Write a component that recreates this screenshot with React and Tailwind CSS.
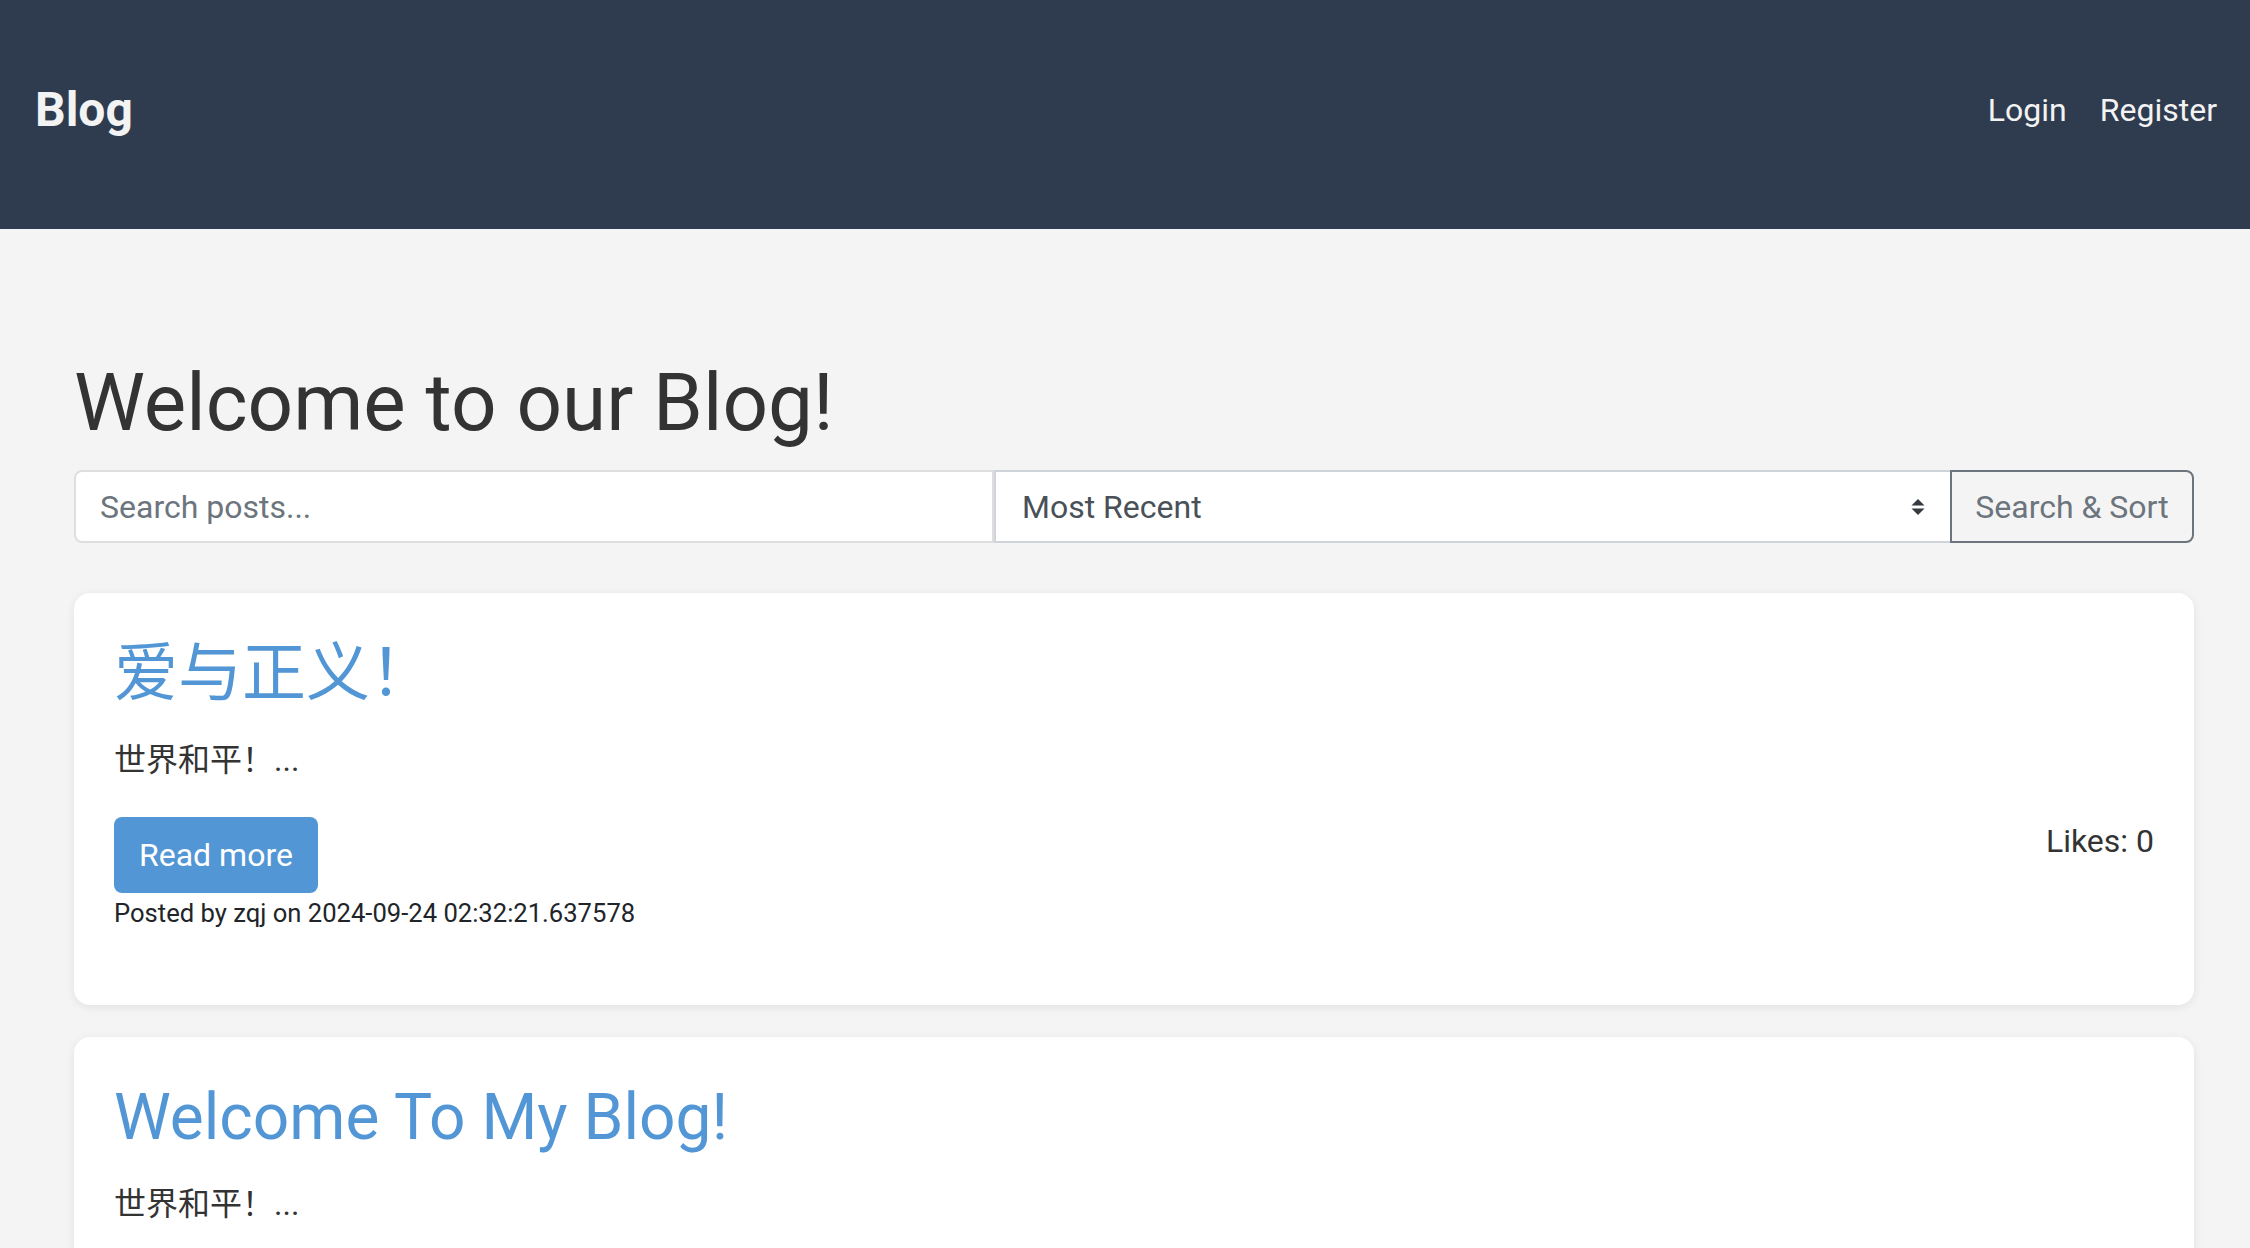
import { useState } from "react";

const posts = [
  {
    id: 1,
    title: "爱与正义！",
    excerpt: "世界和平！...",
    author: "zqj",
    created: "2024-09-24 02:32:21.637578",
    likes: 0,
  },
  {
    id: 2,
    title: "Welcome To My Blog!",
    excerpt: "世界和平！...",
    author: "zqj",
    created: "2024-09-24 02:30:11.215034",
    likes: 0,
  },
];

function SortArrows() {
  return (
    <svg width="16" height="20" viewBox="0 0 16 20" className="shrink-0">
      <path d="M1.5 8.5 L8 2 L14.5 8.5 Z" fill="#343a40" />
      <path d="M1.5 11.5 L8 18 L14.5 11.5 Z" fill="#343a40" />
    </svg>
  );
}

function PostCard({ post }) {
  return (
    <div className="bg-white rounded-[16px] shadow-[0_2px_10px_rgba(0,0,0,0.08)] pt-[42px] pb-[40px] pl-[40px] pr-[40px]">
      <h2 className="text-[64px] leading-[77px] text-[#5296d5] font-normal mb-[24px]">
        {post.title}
      </h2>
      <p className="text-[32px] leading-[48px] text-[#333] mb-[33px]">{post.excerpt}</p>
      <div className="flex justify-between items-start">
        <div>
          <button className="h-[76px] px-[25px] rounded-[8px] bg-[#5296d5] text-white text-[32px] leading-[48px]">
            Read more
          </button>
          <p className="text-[25.6px] leading-[40px] text-[#212529] mb-[32px]">
            Posted by {post.author} on {post.created}
          </p>
        </div>
        <p className="text-[32px] leading-[48px] text-[#333]">Likes: {post.likes}</p>
      </div>
    </div>
  );
}

export default function App() {
  const [search, setSearch] = useState("");
  const [sort, setSort] = useState("recent");

  return (
    <div className="min-h-screen bg-[#f4f4f4] font-['Roboto','Noto_Sans_CJK_SC',sans-serif]">
      <header className="h-[229px] bg-[#2f3c4f] pl-[35px] pr-[33px] pb-[10px] flex items-center justify-between">
        <h1 className="text-[48px] font-bold text-[#f3f3f3]">Blog</h1>
        <nav className="flex items-center gap-[33px] text-[32px] text-[#f3f3f3]">
          <a href="#">Login</a>
          <a href="#">Register</a>
        </nav>
      </header>

      <main className="pl-[74px] pr-[56px] pt-[125px]">
        <h1 className="text-[80px] leading-[98px] text-[#333] font-normal mb-[18px]">
          Welcome to our Blog!
        </h1>

        <form className="flex h-[73px] mb-[50px]" onSubmit={(e) => e.preventDefault()}>
          <input
            type="text"
            value={search}
            onChange={(e) => setSearch(e.target.value)}
            placeholder="Search posts..."
            className="w-[920px] h-full bg-white border-2 border-[#dedede] rounded-l-[8px] px-[24px] text-[32px] text-[#212529] placeholder:text-[#6c757d] outline-none"
          />
          <div className="flex-1 h-full bg-white border-y-2 border-l-2 border-[#ced4da] flex items-center justify-between pl-[26px] pr-[24px] relative">
            <span className="text-[32px] text-[#495057]">Most Recent</span>
            <SortArrows />
            <select
              value={sort}
              onChange={(e) => setSort(e.target.value)}
              className="absolute inset-0 opacity-0"
            >
              <option value="recent">Most Recent</option>
              <option value="likes">Most Liked</option>
            </select>
          </div>
          <button
            type="submit"
            className="w-[244px] h-full border-2 border-[#6c757d] rounded-r-[8px] text-[32px] text-[#6c757d]"
          >
            Search &amp; Sort
          </button>
        </form>

        <div className="flex flex-col gap-[32px] pb-[40px]">
          {posts.map((p) => (
            <PostCard key={p.id} post={p} />
          ))}
        </div>
      </main>
    </div>
  );
}
